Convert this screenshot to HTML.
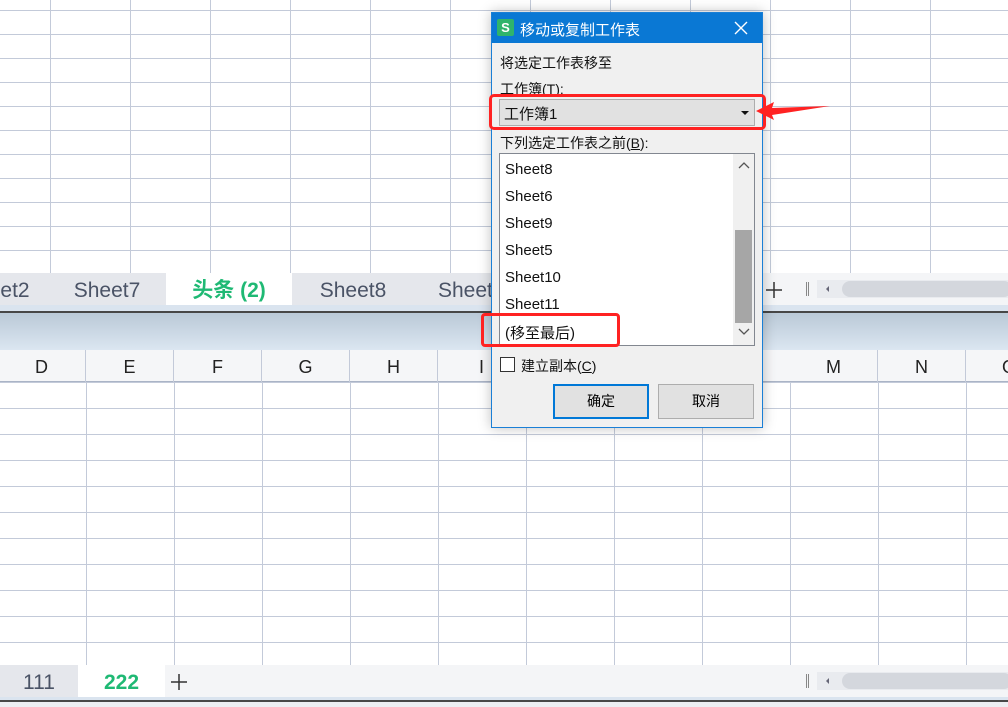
<!DOCTYPE html>
<html><head><meta charset="utf-8"><style>
*{margin:0;padding:0;box-sizing:border-box}
body{width:1008px;height:707px;overflow:hidden;background:#fff;font-family:"Liberation Sans","Noto Sans CJK SC",sans-serif;position:relative}
.a{position:absolute}
.grid1{left:0;top:0;width:1008px;height:273px;
background-image:linear-gradient(to right,#c3cad9 1px,transparent 1px),linear-gradient(to bottom,#c3cad9 1px,transparent 1px);
background-size:80px 24px;background-position:50px 10px}
.grid2{left:0;top:382px;width:1008px;height:283px;
background-image:linear-gradient(to right,#c3cad9 1px,transparent 1px),linear-gradient(to bottom,#c3cad9 1px,transparent 1px);
background-size:88px 26px;background-position:86px 0px}
.tab{position:absolute;font-size:21px;color:#4a5366;line-height:32px;text-align:center;font-family:"Liberation Sans","Noto Sans CJK SC",sans-serif}
.hdr{position:absolute;top:350px;width:88px;height:32px;line-height:34px;text-align:center;font-size:18px;color:#222;border-right:1px solid #c3cad9}
.dlg{left:491px;top:12px;width:272px;height:416px;background:#f0f0f0;border:1px solid #1a7fd6;box-shadow:0 0 12px rgba(0,0,0,.25)}
.t{font-size:14px;color:#111;position:absolute}
.li{position:absolute;left:5px;font-size:15px;color:#111}
</style></head><body>
<div class="a grid1"></div>
<div class="a" style="left:0;top:273px;width:1008px;height:32px;background:#f4f5f7"></div>
<div class="a" style="left:0;top:273px;width:760px;height:32px;background:#e5e7ec"></div>
<div class="a" style="left:166px;top:273px;width:126px;height:32px;background:#fff"></div>
<div class="tab" style="left:-20px;top:275px;width:70px">et2</div>
<div class="tab" style="left:62px;top:275px;width:90px">Sheet7</div>
<div class="tab" style="left:166px;top:275px;width:126px;color:#1fb974;font-weight:bold">头条 (2)</div>
<div class="tab" style="left:308px;top:275px;width:90px">Sheet8</div>
<div class="tab" style="left:428px;top:275px;width:90px;text-align:left;padding-left:10px">Sheet9</div>
<svg class="a" style="left:765px;top:281px" width="18" height="18"><path d="M9 1V17M1 9H17" stroke="#333" stroke-width="1.5"/></svg>
<div class="a" style="left:806px;top:282px;width:1px;height:14px;background:#888"></div>
<div class="a" style="left:808px;top:282px;width:1px;height:14px;background:#888"></div>
<div class="a" style="left:817px;top:280px;width:191px;height:18px;background:#e9ebef"></div>
<div class="a" style="left:826px;top:286px;width:0;height:0;border-top:3px solid transparent;border-bottom:3px solid transparent;border-right:3px solid #667"></div>
<div class="a" style="left:842px;top:281px;width:170px;height:16px;background:#d4d7dd;border-radius:8px"></div>
<div class="a" style="left:0;top:305px;width:1008px;height:6px;background:#dae4ef"></div>
<div class="a" style="left:0;top:311px;width:1008px;height:2px;background:#474747"></div>
<div class="a" style="left:0;top:313px;width:1008px;height:37px;background:linear-gradient(#bac9d7,#dbe6f1)"></div>
<div class="a" style="left:0;top:350px;width:1008px;height:32px;background:#f5f6f8;border-bottom:1px solid #aab4c6"></div>
<div class="hdr" style="left:-2px">D</div>
<div class="hdr" style="left:86px">E</div>
<div class="hdr" style="left:174px">F</div>
<div class="hdr" style="left:262px">G</div>
<div class="hdr" style="left:350px">H</div>
<div class="hdr" style="left:438px">I</div>
<div class="hdr" style="left:790px">M</div>
<div class="hdr" style="left:878px">N</div>
<div class="hdr" style="left:966px;text-align:left;padding-left:36px">O</div>
<div class="a grid2"></div>
<div class="a" style="left:0;top:665px;width:1008px;height:32px;background:#f4f5f7"></div>
<div class="a" style="left:0;top:665px;width:78px;height:32px;background:#e5e7ec"></div>
<div class="a" style="left:78px;top:665px;width:87px;height:32px;background:#fff"></div>
<div class="tab" style="left:0;top:667px;width:78px">111</div>
<div class="tab" style="left:78px;top:667px;width:87px;color:#1fb974;font-weight:bold">222</div>
<svg class="a" style="left:170px;top:673px" width="18" height="18"><path d="M9 1V17M1 9H17" stroke="#333" stroke-width="1.5"/></svg>
<div class="a" style="left:806px;top:674px;width:1px;height:14px;background:#888"></div>
<div class="a" style="left:808px;top:674px;width:1px;height:14px;background:#888"></div>
<div class="a" style="left:817px;top:672px;width:191px;height:18px;background:#e9ebef"></div>
<div class="a" style="left:826px;top:678px;width:0;height:0;border-top:3px solid transparent;border-bottom:3px solid transparent;border-right:3px solid #667"></div>
<div class="a" style="left:842px;top:673px;width:170px;height:16px;background:#d4d7dd;border-radius:8px"></div>
<div class="a" style="left:0;top:697px;width:1008px;height:3px;background:#dae4ef"></div>
<div class="a" style="left:0;top:700px;width:1008px;height:2px;background:#474747"></div>
<div class="a" style="left:0;top:702px;width:1008px;height:5px;background:#eceef2"></div>
<div class="a dlg">
 <div class="a" style="left:0;top:0;width:270px;height:30px;background:#0a78d4"></div>
 <div class="a" style="left:5px;top:6px;width:17px;height:17px;background:#2fb46b;border-radius:2px;color:#fff;font-size:13px;font-weight:bold;text-align:center;line-height:17px">S</div>
 <div class="a" style="left:28px;top:6px;font-size:15px;color:#fff">移动或复制工作表</div>
 <svg class="a" style="left:242px;top:8px" width="14" height="14"><path d="M1 1L13 13M13 1L1 13" stroke="#fff" stroke-width="1.4"/></svg>
 <div class="t" style="left:8px;top:40px">将选定工作表移至</div>
 <div class="t" style="left:8px;top:66px">工作簿(<u>T</u>):</div>
 <div class="a" style="left:7px;top:86px;width:256px;height:27px;background:#e1e1e1;border:1px solid #adadad"></div>
 <div class="a" style="left:12px;top:90px;font-size:15px;color:#111">工作簿1</div>
 <div class="a" style="left:249px;top:98px;width:0;height:0;border-left:4px solid transparent;border-right:4px solid transparent;border-top:4px solid #111"></div>
 <div class="t" style="left:8px;top:120px">下列选定工作表之前(<u>B</u>):</div>
 <div class="a" style="left:7px;top:140px;width:256px;height:193px;background:#fff;border:1px solid #828790">
  <div class="li" style="top:7px">Sheet8</div>
  <div class="li" style="top:34px">Sheet6</div>
  <div class="li" style="top:61px">Sheet9</div>
  <div class="li" style="top:88px">Sheet5</div>
  <div class="li" style="top:115px">Sheet10</div>
  <div class="li" style="top:142px">Sheet11</div>
  <div class="li" style="top:168px">(移至最后)</div>
  <div class="a" style="left:233px;top:0;width:21px;height:191px;background:#f0f0f0"></div>
  <div class="a" style="left:235px;top:76px;width:17px;height:93px;background:#a6a6a6"></div>
  <svg class="a" style="left:238px;top:8px" width="12" height="8"><path d="M1 6L6 1L11 6" stroke="#555" stroke-width="1.3" fill="none"/></svg>
  <svg class="a" style="left:238px;top:174px" width="12" height="8"><path d="M1 1L6 6L11 1" stroke="#555" stroke-width="1.3" fill="none"/></svg>
 </div>
 <div class="a" style="left:8px;top:344px;width:15px;height:15px;background:#fff;border:1px solid #333"></div>
 <div class="t" style="left:29px;top:343px">建立副本(<u>C</u>)</div>
 <div class="a" style="left:61px;top:371px;width:96px;height:35px;background:#e1e1e1;border:2px solid #0078d7;font-size:14px;text-align:center;line-height:31px">确定</div>
 <div class="a" style="left:166px;top:371px;width:96px;height:35px;background:#e1e1e1;border:1px solid #adadad;font-size:14px;text-align:center;line-height:33px">取消</div>
</div>
<div class="a" style="left:489px;top:94px;width:277px;height:36px;border:3px solid #f22;border-radius:5px"></div>
<svg class="a" style="left:752px;top:100px" width="80" height="22"><polygon points="4,11 22,2 20,8 78,6 20,15 22,20" fill="#f22"/></svg>
<div class="a" style="left:481px;top:313px;width:139px;height:34px;border:3px solid #f22;border-radius:4px"></div>
</body></html>
